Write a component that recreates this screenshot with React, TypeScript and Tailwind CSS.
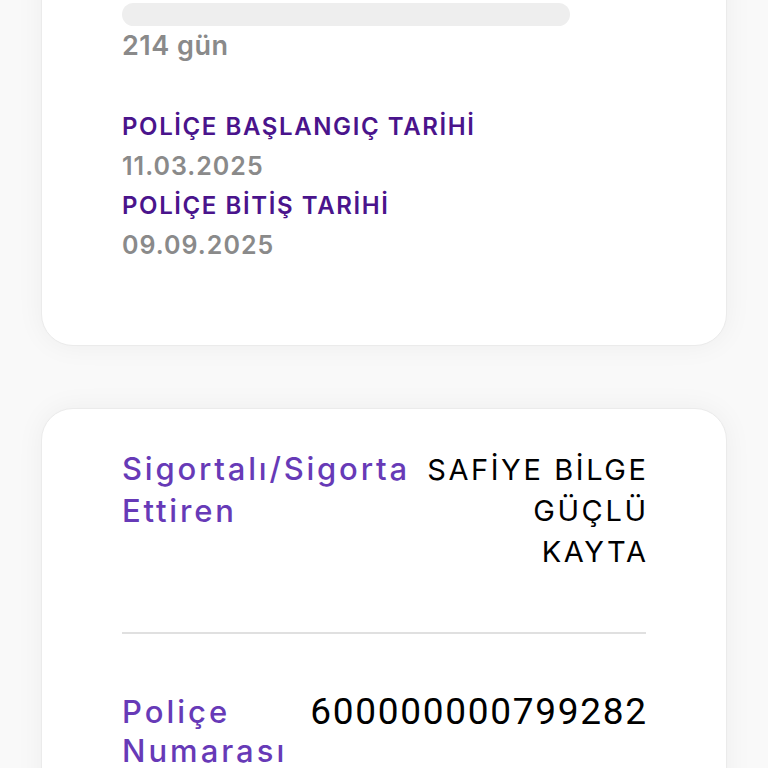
import React from "react";

export default function App() {
  return (
    <div className="min-h-screen overflow-hidden bg-[#f9f9f9] font-['Inter',sans-serif]">
      <div className="mx-[41px] -mt-[60px] rounded-[32px] border border-[#ebebeb] bg-white px-[80px] pb-[80px] pt-[62px] shadow-[0_0_28px_rgba(0,0,0,0.05)]">
        <div className="h-[23px] w-[448px] rounded-full bg-[#eeeeee]" />
        <p className="text-[27px] font-semibold leading-[40px] tracking-[0.5px] text-[#8a8a8a]">
          214 gün
        </p>
        <div className="mt-[41px] text-[24px] font-semibold leading-[39.5px] tracking-[1.6px]">
          <p className="text-[#4a148c]">POLİÇE BAŞLANGIÇ TARİHİ</p>
          <p className="text-[25px] tracking-[1px] text-[#8a8a8a]">11.03.2025</p>
          <p className="text-[#4a148c]">POLİÇE BİTİŞ TARİHİ</p>
          <p className="text-[25px] tracking-[1px] text-[#8a8a8a]">09.09.2025</p>
        </div>
      </div>

      <div className="mx-[41px] mt-[62px] rounded-[32px] border border-[#ebebeb] bg-white px-[80px] pb-[60px] pt-[39px] shadow-[0_0_28px_rgba(0,0,0,0.05)]">
        <div className="flex items-start justify-between gap-[8px]">
          <p className="w-[296px] shrink-0 whitespace-nowrap text-[31px] font-medium leading-[42px] tracking-[2.8px] text-[#673ab7]">
            Sigortalı/Sigorta
            <br />
            Ettiren
          </p>
          <p className="-mr-[2.6px] whitespace-nowrap pt-[1px] text-right text-[29px] leading-[41px] tracking-[2.6px] text-black">
            SAFİYE BİLGE
            <br />
            GÜÇLÜ
            <br />
            KAYTA
          </p>
        </div>
        <div className="mt-[60px] h-[2px] bg-[#e0e0e0]" />
        <div className="mt-[58px] flex items-start justify-between gap-[10px]">
          <p className="shrink-0 whitespace-nowrap text-[31px] font-medium leading-[39px] tracking-[3px] text-[#673ab7]">
            Poliçe
            <br />
            Numarası
          </p>
          <p className="-mr-[1.7px] whitespace-nowrap font-['Roboto',sans-serif] text-[37px] leading-[40px] tracking-[1.7px] text-black">
            600000000799282
          </p>
        </div>
      </div>
    </div>
  );
}
